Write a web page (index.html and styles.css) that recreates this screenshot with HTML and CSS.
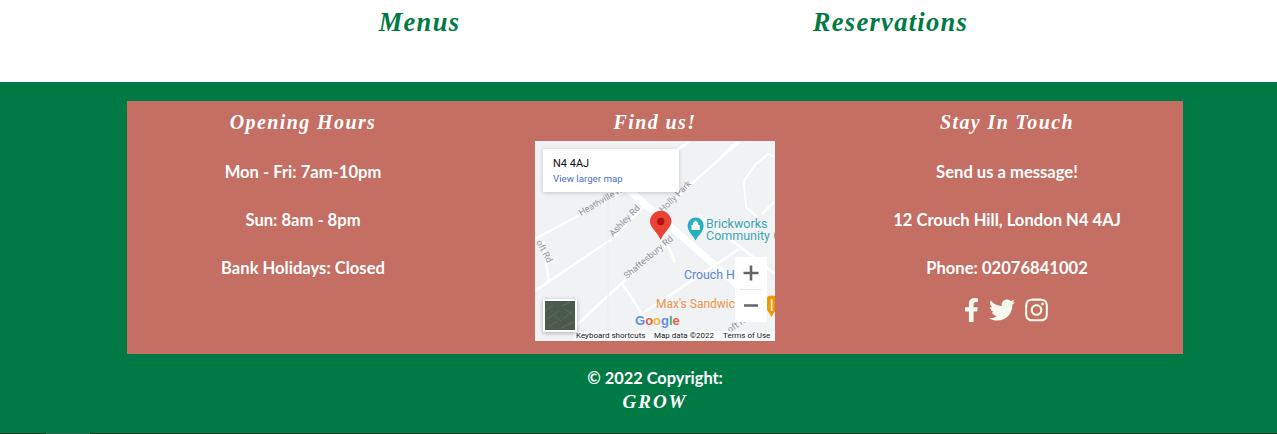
FILE: index.html
```html
<!DOCTYPE html>
<html>
<head>
    <title>GROW</title>
    <link rel="stylesheet" href="styles.css">
</head>
<body>
    <div class="links">
        <a class="link" href="#">Menus</a>
        <a class="link" href="#">Reservations</a>
    </div>

    <footer class="footer">
        <div class="panel">
            <div class="col">
                <h3>Opening Hours</h3>
                <p>Mon - Fri: 7am-10pm</p>
                <p>Sun: 8am - 8pm</p>
                <p>Bank Holidays: Closed</p>
            </div>

            <div class="col">
                <h3>Find us!</h3>
                <svg class="map" viewBox="0 0 240 200" width="240" height="200">
                    <rect class="map-bg" width="240" height="200"/>

                    <g class="road">
                        <path d="M0 98 L43 75 L95 47"/>
                        <path d="M0 150 L78 97 L112 62"/>
                        <path d="M35 190 L87 142 L135 101"/>
                        <path d="M87 142 L113 182"/>
                        <path d="M8 100 L14 142"/>
                        <path d="M108 172 L204 108"/>
                        <path d="M118 77 L205 0"/>
                        <path d="M143 8 L155 0"/>
                        <path d="M187 15 L203 0"/>
                        <path d="M227 73 L240 60"/>
                        <path d="M163 73 L240 133"/>
                        <path d="M132 101 L140 122"/>
                    </g>
                    <path class="road-main" d="M88 44 L215 155"/>
                    <path class="road-thin" d="M209 40 L220 24 L233 13 L240 16 M209 40 L211 66 L222 76"/>
                    <path class="road-faint" d="M73 60 L73 200"/>

                    <g class="road-label">
                        <text transform="translate(46 75) rotate(-30)">Heathville Rd</text>
                        <text transform="translate(78 96) rotate(-46)">Ashley Rd</text>
                        <text transform="translate(128 72) rotate(-45)">Holly Park</text>
                        <text transform="translate(92 138) rotate(-40)">Shaftesbury Rd</text>
                        <text transform="translate(1 101) rotate(62)">oft Rd</text>
                        <text transform="translate(195 192) rotate(-35)">oft R</text>
                    </g>

                    <path class="poi-teal" d="M160.6 99.5 C158 94 152.6 91 152.6 84.4 A8 8 0 0 1 168.6 84.4 C168.6 91 163.2 94 160.6 99.5Z"/>
                    <path class="poi-mark" d="M156.5 89 V84 H158 V82 L160.6 79.5 L163.2 82 V84 H164.7 V89Z"/>
                    <text class="poi-teal-text" x="171" y="87">Brickworks</text>
                    <text class="poi-teal-text" x="171" y="99">Community Ce</text>
                    <text class="poi-blue-text" x="149" y="138">Crouch Hill</text>
                    <text class="poi-orange-text" x="121" y="167">Max's Sandwich</text>
                    <path class="poi-orange" d="M236.6 176 C234.5 171 229.6 168 229.6 161.5 A7 7 0 0 1 243.6 161.5 C243.6 168 238.7 171 236.6 176Z"/>
                    <path class="poi-fork" d="M236.6 158 V170"/>

                    <path class="pin" d="M125.7 99 C122 90 115 87 115 80.5 A10.7 10.7 0 0 1 136.4 80.5 C136.4 87 129.4 90 125.7 99Z"/>
                    <circle class="pin-dot" cx="125.7" cy="80.5" r="3.7"/>

                    <rect class="attr-bg" x="38" y="190" width="202" height="10"/>
                    <g class="attr">
                        <text x="41" y="197">Keyboard shortcuts</text>
                        <text x="119" y="197">Map data ©2022</text>
                        <text x="188" y="197">Terms of Use</text>
                    </g>

                    <text class="glogo" x="100" y="184"><tspan class="g-blue">G</tspan><tspan class="g-red">o</tspan><tspan class="g-yellow">o</tspan><tspan class="g-blue">g</tspan><tspan class="g-green">l</tspan><tspan class="g-red">e</tspan></text>

                    <rect class="sat-frame" x="8" y="158" width="34" height="33"/>
                    <rect class="sat-fill" x="10" y="160" width="30" height="29"/>
                    <path class="sat-tex" d="M10 170 L18 164 M12 178 L24 170 M26 165 L36 161 M14 186 L22 180 M28 178 L38 170 M26 187 L38 181 M18 174 L26 180 M30 168 L38 174"/>

                    <rect class="card" x="8" y="8" width="136" height="43"/>
                    <text class="card-title" x="18" y="26">N4 4AJ</text>
                    <text class="card-link" x="18" y="41">View larger map</text>

                    <rect class="zoom-box" x="200" y="116" width="32" height="65"/>
                    <path class="zoom-sep" d="M205 148.5 H227"/>
                    <path class="zoom-glyph" d="M208.5 132 H223.5 M216 124.5 V139.5 M209 164.5 H223"/>
                </svg>
            </div>

            <div class="col">
                <h3>Stay In Touch</h3>
                <p>Send us a message!</p>
                <p>12 Crouch Hill, London N4 4AJ</p>
                <p>Phone: 02076841002</p>
                <div class="social">
                    <svg class="icon-f" viewBox="0 0 320 512"><path d="M279.14 288l14.22-92.66h-88.91v-60.13c0-25.35 12.42-50.06 52.24-50.06h40.42V6.26S260.43 0 225.36 0c-73.22 0-121.08 44.38-121.08 124.72v70.62H22.89V288h81.39v224h100.17V288z"/></svg>
                    <svg class="icon-t" viewBox="0 0 512 512"><path d="M459.37 151.716c.325 4.548.325 9.097.325 13.645 0 138.72-105.583 298.558-298.558 298.558-59.452 0-114.68-17.219-161.137-47.106 8.447.974 16.568 1.299 25.34 1.299 49.055 0 94.213-16.568 130.274-44.832-46.132-.975-84.792-31.188-98.112-72.772 6.498.974 12.995 1.624 19.818 1.624 9.421 0 18.843-1.3 27.614-3.573-48.081-9.747-84.143-51.98-84.143-102.985v-1.299c13.969 7.797 30.214 12.67 47.431 13.319-28.264-18.843-46.781-51.005-46.781-87.391 0-19.492 5.197-37.36 14.294-52.954 51.655 63.675 129.3 105.258 216.365 109.807-1.624-7.797-2.599-15.918-2.599-24.04 0-57.828 46.782-104.934 104.934-104.934 30.213 0 57.502 12.67 76.67 33.137 23.715-4.548 46.456-13.32 66.599-25.34-7.798 24.366-24.366 44.833-46.132 57.827 21.117-2.273 41.584-8.122 60.426-16.243-14.292 20.791-32.161 39.308-52.628 54.253z"/></svg>
                    <svg class="icon-i" viewBox="0 0 448 512"><path d="M224.1 141c-63.6 0-114.9 51.3-114.9 114.9s51.3 114.9 114.9 114.9S339 319.5 339 255.9 287.7 141 224.1 141zm0 189.6c-41.1 0-74.7-33.5-74.7-74.7s33.5-74.7 74.7-74.7 74.7 33.5 74.7 74.7-33.6 74.7-74.7 74.7zm146.4-194.3c0 14.9-12 26.8-26.8 26.8-14.9 0-26.8-12-26.8-26.8s12-26.8 26.8-26.8 26.8 12 26.8 26.8zm76.1 27.2c-1.7-35.9-9.9-67.7-36.2-93.9-26.2-26.2-58-34.4-93.9-36.2-37-2.1-147.9-2.1-184.9 0-35.8 1.7-67.6 9.9-93.9 36.1s-34.4 58-36.2 93.9c-2.1 37-2.1 147.9 0 184.9 1.7 35.9 9.9 67.7 36.2 93.9s58 34.4 93.9 36.2c37 2.1 147.9 2.1 184.9 0 35.9-1.7 67.7-9.9 93.9-36.2 26.2-26.2 34.4-58 36.2-93.9 2.1-37 2.1-147.8 0-184.8zM398.8 388c-7.8 19.6-22.9 34.7-42.6 42.6-29.5 11.7-99.5 9-132.1 9s-102.7 2.6-132.1-9c-19.6-7.8-34.7-22.9-42.6-42.6-11.7-29.5-9-99.5-9-132.1s-2.6-102.7 9-132.1c7.8-19.6 22.9-34.7 42.6-42.6 29.5-11.7 99.5-9 132.1-9s102.7-2.6 132.1 9c19.6 7.8 34.7 22.9 42.6 42.6 11.7 29.5 9 99.5 9 132.1s2.7 102.7-9 132.1z"/></svg>
                </div>
            </div>
        </div>

        <div class="copyright">
            <div>© 2022 Copyright:</div>
            <div class="brand">GROW</div>
        </div>
    </footer>

    <div class="page-edge"><span></span></div>
</body>
</html>
```

FILE: styles.css
```css
body {
    margin: 0;
    font-family: "Lato", Arial, sans-serif;
    font-weight: 700;
    color: #fff;
    background-color: #fff;
    overflow: hidden;
}
.links {
    display: grid;
    grid-template-columns: 471px 471px;
    padding-left: 184px;
    height: 82px;
}
.link {
    font-family: "Liberation Serif", serif;
    font-style: italic;
    font-weight: 700;
    font-size: 26.5px;
    letter-spacing: 1.3px;
    line-height: 44px;
    text-align: center;
    text-decoration: none;
    color: #007a45;
}
.footer {
    background-color: #007a45;
    height: 351px;
    padding-top: 19px;
    box-sizing: border-box;
}
.panel {
    display: grid;
    grid-template-columns: repeat(3, 352px);
    width: 1056px;
    height: 253px;
    margin-left: 127px;
    background-color: #c56e63;
}
.col {
    display: flex;
    flex-direction: column;
    align-items: center;
}
h3 {
    margin: 0;
    height: 40px;
    font-family: "Liberation Serif", serif;
    font-style: italic;
    font-weight: 700;
    font-size: 20px;
    letter-spacing: 1.4px;
    line-height: 43px;
}
p {
    margin: 0 0 24px;
    font-size: 16.6px;
    line-height: 24px;
}
.col p:first-of-type {
    margin-top: 19px;
}
.social {
    display: flex;
    align-items: center;
    gap: 10px;
    margin-top: -7px;
    margin-right: 2px;
    height: 26px;
}
.social svg {
    display: block;
    fill: #f5fbee;
}
.icon-f {
    width: 15px;
    height: 26px;
}
.icon-t {
    width: 26px;
    height: 26px;
}
.icon-i {
    width: 23px;
    height: 26px;
}
.copyright {
    width: 1056px;
    margin-left: 127px;
    padding-top: 12px;
    text-align: center;
    font-size: 16.4px;
    line-height: 24px;
}
.brand {
    font-family: "Liberation Serif", serif;
    font-style: italic;
    font-size: 19px;
    letter-spacing: 2px;
}
.page-edge {
    height: 1px;
    background-color: #0b3d27;
}
.page-edge span {
    display: block;
    width: 44px;
    height: 1px;
    margin-left: 46px;
    background-color: #2f6b52;
}

/* map */
.map {
    display: block;
    font-family: "Roboto", Arial, sans-serif;
    font-weight: 400;
}
.map-bg {
    fill: #f1f2f4;
}
.road path {
    fill: none;
    stroke: #fff;
    stroke-width: 2.5;
}
.road-main {
    fill: none;
    stroke: #fff;
    stroke-width: 7;
}
.road-thin {
    fill: none;
    stroke: #fff;
    stroke-width: 2;
}
.road-faint {
    fill: none;
    stroke: #ebecee;
    stroke-width: 1;
}
.road-label {
    font-size: 9px;
    fill: #90959a;
}
.poi-teal {
    fill: #25b0c4;
}
.poi-mark {
    fill: #fff;
}
.poi-teal-text {
    font-size: 12.5px;
    fill: #3fa5b3;
}
.poi-blue-text {
    font-size: 12.3px;
    fill: #5b85d6;
}
.poi-orange-text {
    font-size: 12px;
    fill: #e8964a;
}
.poi-orange {
    fill: #f29900;
}
.poi-fork {
    fill: none;
    stroke: #fff;
    stroke-width: 1.5;
}
.pin {
    fill: #ea4335;
}
.pin-dot {
    fill: #b31412;
}
.attr-bg {
    fill: #fff;
    opacity: 0.6;
}
.attr {
    font-size: 8px;
    fill: #222;
}
.glogo {
    font-family: "Liberation Sans", sans-serif;
    font-size: 13px;
    font-weight: 700;
}
.g-blue {
    fill: #5f8fe8;
}
.g-red {
    fill: #e2604f;
}
.g-yellow {
    fill: #f0b93a;
}
.g-green {
    fill: #4cae64;
}
.sat-frame {
    fill: #fff;
    filter: drop-shadow(0 1px 2px rgba(0, 0, 0, 0.3));
}
.sat-fill {
    fill: #4a5a4c;
}
.sat-tex {
    fill: none;
    stroke: #5c7555;
    stroke-width: 1.5;
    opacity: 0.6;
}
.card {
    fill: #fff;
    filter: drop-shadow(0 1px 2px rgba(0, 0, 0, 0.18));
}
.card-title {
    font-size: 11px;
    fill: #111;
}
.card-link {
    font-size: 9.7px;
    fill: #4a6fc4;
}
.zoom-box {
    fill: #fff;
}
.zoom-sep {
    stroke: #e6e6e6;
    stroke-width: 1;
}
.zoom-glyph {
    fill: none;
    stroke: #666;
    stroke-width: 2.6;
}
```
